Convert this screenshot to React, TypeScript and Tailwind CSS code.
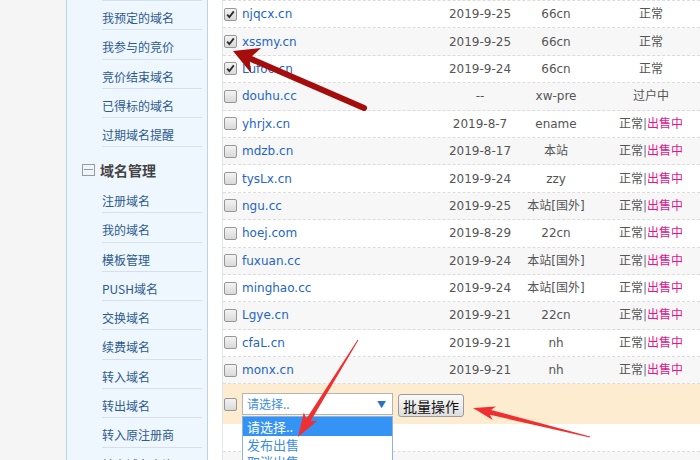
import React from "react"

const sideTop = ["我预定的域名", "我参与的竞价", "竞价结束域名", "已得标的域名", "过期域名提醒"]
const sideDomain = ["注册域名", "我的域名", "模板管理", "PUSH域名", "交换域名", "续费域名", "转入域名", "转出域名", "转入原注册商", "转出域名查询"]

type Row = { name: string; date: string; reg: string; sale: boolean; status?: string; checked?: boolean }

const rows: Row[] = [
  { name: "njqcx.cn", date: "2019-9-25", reg: "66cn", sale: false, checked: true },
  { name: "xssmy.cn", date: "2019-9-25", reg: "66cn", sale: false, checked: true },
  { name: "Lufoo.cn", date: "2019-9-24", reg: "66cn", sale: false, checked: true },
  { name: "douhu.cc", date: "--", reg: "xw-pre", sale: false, status: "过户中" },
  { name: "yhrjx.cn", date: "2019-8-7", reg: "ename", sale: true },
  { name: "mdzb.cn", date: "2019-8-17", reg: "本站", sale: true },
  { name: "tysLx.cn", date: "2019-9-24", reg: "zzy", sale: true },
  { name: "ngu.cc", date: "2019-9-25", reg: "本站[国外]", sale: true },
  { name: "hoej.com", date: "2019-8-29", reg: "22cn", sale: true },
  { name: "fuxuan.cc", date: "2019-9-24", reg: "本站[国外]", sale: true },
  { name: "minghao.cc", date: "2019-9-24", reg: "本站[国外]", sale: true },
  { name: "Lgye.cn", date: "2019-9-21", reg: "22cn", sale: true },
  { name: "cfaL.cn", date: "2019-9-21", reg: "nh", sale: true },
  { name: "monx.cn", date: "2019-9-21", reg: "nh", sale: true },
]

function Check({ on }: { on?: boolean }) {
  return (
    <span className="flex h-[13px] w-[13px] shrink-0 items-center justify-center rounded-[2px] border border-[#979797] bg-linear-to-b from-[#f3f3f3] to-[#d9d9d9]">
      {on && (
        <svg width="9" height="9" viewBox="0 0 9 9">
          <path d="M1.2 4.6 L3.4 7 L7.8 1.4" fill="none" stroke="#2b2b2b" strokeWidth="1.8" />
        </svg>
      )}
    </span>
  )
}

// tapered arrow outline, points worked out from tail/tip coordinates
function arrow(tx: number, ty: number, px: number, py: number, w0: number, w1: number, hl: number, hw: number) {
  const dx = px - tx
  const dy = py - ty
  const L = Math.hypot(dx, dy)
  const ux = dx / L
  const uy = dy / L
  const nx = -uy
  const ny = ux
  const bx = px - ux * hl
  const by = py - uy * hl
  const gx = bx - ux * 4
  const gy = by - uy * 4
  const p = [
    [tx + (nx * w0) / 2, ty + (ny * w0) / 2],
    [bx + (nx * w1) / 2, by + (ny * w1) / 2],
    [gx + nx * hw, gy + ny * hw],
    [px, py],
    [gx - nx * hw, gy - ny * hw],
    [bx - (nx * w1) / 2, by - (ny * w1) / 2],
    [tx - (nx * w0) / 2, ty - (ny * w0) / 2],
  ]
  return p.map((q) => q[0].toFixed(1) + "," + q[1].toFixed(1)).join(" ")
}

export default function App() {
  return (
    <div className="relative flex h-[460px] w-[700px] overflow-hidden bg-white font-['DejaVu_Sans','Noto_Sans_CJK_SC',sans-serif]">
      <div className="w-[66px] shrink-0 bg-[#f5f5f5]" />

      <aside className="w-[142px] shrink-0 border-x border-[#bcd3ee] bg-[#eef6fe] font-['Noto_Sans_CJK_SC',sans-serif]">
        <div className="ml-[35px] w-[100px]">
          <div className="h-px bg-[#d6e0ea]" />
          {sideTop.map((s) => (
            <div key={s} className="h-[29.3px] border-b border-[#d6e0ea] pt-[9px] text-[12px] leading-[16px] text-[#2d5b8e]">
              {s}
            </div>
          ))}
        </div>
        <div className="ml-[15px] flex h-[36.5px] items-start gap-[5px] pt-[14.5px]">
          <span className="relative mt-[2px] h-[12px] w-[13px] border border-[#9a9a9a]">
            <span className="absolute left-[1px] right-[1px] top-[4px] h-px bg-[#9a9a9a]" />
          </span>
          <span className="text-[14px] font-bold leading-[16px] text-[#444]">域名管理</span>
        </div>
        <div className="ml-[35px] w-[100px]">
          {sideDomain.map((s) => (
            <div key={s} className="h-[29.3px] border-b border-[#d6e0ea] pt-[9px] text-[12px] leading-[16px] text-[#2d5b8e]">
              {s}
            </div>
          ))}
        </div>
      </aside>

      <div className="w-[14px] shrink-0" />

      <main className="flex-1 border-l border-[#dfe6ee] text-[12px]">
        <div className="border-t border-dashed border-[#dcdcdc]" />
        {rows.map((r, i) => (
          <div
            key={r.name}
            className={`flex h-[27.4px] items-center border-b border-dashed border-[#dcdcdc] ${i % 2 === 1 ? "bg-[#f7f7f7]" : "bg-white"}`}
          >
            <div className="flex w-[217px] items-center gap-[5px] pl-[1px]">
              <Check on={r.checked} />
              <span className="text-[#2465c8]">{r.name}</span>
            </div>
            <div className="w-[80px] text-center text-[#555]">{r.date}</div>
            <div className="w-[72px] text-center text-[#555]">{r.reg}</div>
            <div className="flex-1 pl-[10px] text-center text-[#555]">
              {r.status ? (
                r.status
              ) : r.sale ? (
                <>
                  正常<span className="text-[#777]">|</span>
                  <span className="text-[#e0178c]">出售中</span>
                </>
              ) : (
                "正常"
              )}
            </div>
          </div>
        ))}

        <div className="flex h-[40px] items-center gap-[5px] bg-[#fdecd0] pl-[1px]">
          <Check />
          <div className="relative">
            <div className="flex h-[22px] w-[151px] items-center justify-between border border-[#b4b4b4] bg-white pl-[4px] pr-[6px] font-['Noto_Sans_CJK_SC',sans-serif] text-[12px] text-[#3d8de0]">
              <span>请选择..</span>
              <span className="text-[9px] text-[#2c6fc4]">▼</span>
            </div>
            <div className="absolute left-0 top-[23px] z-10 w-[151px] border border-[#8fb4dc] bg-white font-['Noto_Sans_CJK_SC',sans-serif] text-[13px] leading-[17px]">
              <div className="flex h-[19px] items-center bg-[#3593f5] px-[4px] text-white">请选择..</div>
              <div className="px-[4px] text-[#3d8de0]">发布出售</div>
              <div className="px-[4px] text-[#3d8de0]">取消出售</div>
            </div>
          </div>
          <button className="ml-[0px] mt-[3px] h-[23px] rounded-[3px] border border-[#9c9c9c] bg-linear-to-b from-[#fafafa] to-[#dedede] px-[4px] font-['Noto_Sans_CJK_SC',sans-serif] text-[14px] leading-[20px] text-[#111]">
            批量操作
          </button>
        </div>
        <div className="h-[27.4px] border-b border-dashed border-[#dcdcdc] bg-white" />
        <div className="h-[27.4px] bg-[#f7f7f7]" />
      </main>

      <svg className="pointer-events-none absolute inset-0 z-20" width="700" height="460" viewBox="0 0 700 460">
        <line x1="364" y1="108" x2="250" y2="58.5" stroke="#a50c0c" strokeWidth="6" strokeLinecap="round" />
        <polygon points="233,51 261,48 249.5,58.5 251,73" fill="#a50c0c" />
        <polygon points={arrow(358, 340, 298, 437, 1, 5, 20, 8)} fill="#f03030" />
        <polygon points={arrow(590, 437, 473, 408, 1, 5, 18, 7)} fill="#f03030" />
      </svg>
    </div>
  )
}
